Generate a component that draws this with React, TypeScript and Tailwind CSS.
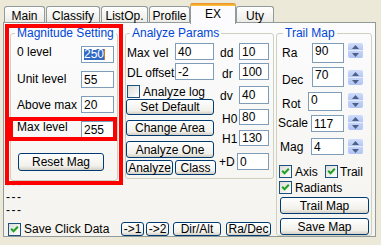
import React from "react";

type P = { className?: string; children?: React.ReactNode };

const Box = ({ className = "", children, top = false }: P & { top?: boolean }) => (
  <div
    className={`border border-[#7F9DB9] bg-white flex pl-[2px] leading-[14px] shrink-0 whitespace-nowrap ${top ? "items-start" : "items-center"} ${className}`}
  >
    {children}
  </div>
);

const Btn = ({ className = "", children }: P) => (
  <div
    className={`border border-[#003C74] rounded-[3px] bg-gradient-to-b from-white via-[#F1F0EA] via-75% to-[#D6D0C5] flex items-center justify-center leading-[14px] whitespace-nowrap shrink-0 ${className}`}
  >
    {children}
  </div>
);

const Check = ({ checked = false, className = "" }: { checked?: boolean; className?: string }) => (
  <div
    className={`w-[13px] h-[13px] border border-[#1C5180] bg-gradient-to-br from-[#DCDCD7] to-white flex items-center justify-center shrink-0 ${className}`}
  >
    {checked && (
      <svg width="11" height="11" viewBox="0 0 11 11">
        <path d="M2.2 4.8 L4.5 7.2 L8.8 2.8" stroke="#21A121" strokeWidth="2" fill="none" />
      </svg>
    )}
  </div>
);

const Spin = ({ className = "" }: { className?: string }) => (
  <div className={`w-[15px] h-[15px] flex flex-col shrink-0 ${className}`}>
    <div className="h-[7px] rounded-t-[2px] bg-gradient-to-b from-[#D0DCFB] to-[#B4C7F4] flex items-center justify-center">
      <svg width="7" height="4" viewBox="0 0 7 4">
        <path d="M0 4 L3.5 0 L7 4 Z" fill="#4D6185" />
      </svg>
    </div>
    <div className="h-[1px] bg-[#E4EAF6]" />
    <div className="h-[7px] rounded-b-[2px] bg-gradient-to-b from-[#C4D3F8] to-[#B0C4F3] flex items-center justify-center">
      <svg width="7" height="4" viewBox="0 0 7 4">
        <path d="M0 0 L3.5 4 L7 0 Z" fill="#4D6185" />
      </svg>
    </div>
  </div>
);

const Tab = ({ className = "", children }: P) => (
  <div
    className={`h-[16px] border-t border-l border-r border-[#919B9C] rounded-t-[3px] bg-gradient-to-b from-white to-[#ECEBE6] flex justify-center pt-[2px] leading-[14px] whitespace-nowrap ${className}`}
  >
    {children}
  </div>
);

const legendCls = "px-[2px] leading-[12px] text-[#0046D5] whitespace-nowrap";
const fsCls = "border border-[#D0D0BF] rounded-[3px] m-0 p-0 min-w-0 shrink-0";

export default function App() {
  return (
    <div className="w-[381px] h-[245px] bg-[#ECE9D8] text-[12px] leading-[14px] text-black font-['Liberation_Sans',Arial,sans-serif] overflow-hidden">
      {/* tabs */}
      <div className="relative z-10 flex items-end h-[22px] pl-[4px]">
        <Tab className="w-[41px]">Main</Tab>
        <Tab className="w-[54px] ml-[1px]">Classify</Tab>
        <Tab className="w-[47px] ml-[1px]">ListOp.</Tab>
        <Tab className="w-[41px] ml-[1px]">Profile</Tab>
        <div className="w-[46px] h-[21px] -mb-[2px] border-l border-r border-[#919B9C] rounded-t-[3px] bg-[#FCFCFE] flex flex-col">
          <div className="h-[3px] -mx-[1px] rounded-t-[3px] bg-gradient-to-b from-[#E68B2C] to-[#FFC73C]" />
          <div className="flex justify-center pt-[1px] leading-[14px]">EX</div>
        </div>
        <Tab className="w-[38px]">Uty</Tab>
      </div>

      {/* panel */}
      <div className="ml-[3px] w-[373px] h-[215px] border border-[#919B9C] bg-gradient-to-b from-[#FCFCFE] to-[#F4F3EE] flex items-start">
        <div className="w-[270px] flex flex-col shrink-0">
          <div className="flex items-start mt-[4px] pl-[6px]">
            {/* Magnitude Setting */}
            <div className="relative w-[108px] shrink-0">
              <fieldset className={`w-[108px] h-[154px] ${fsCls}`}>
                <legend className={`ml-[4px] ${legendCls}`}>Magnitude Setting</legend>
                <div className="flex flex-col pl-[6px]">
                  <div className="flex items-start mt-[7px] h-[17px]">
                    <span className="w-[64px] -mt-[1px]">0 level</span>
                    <Box className="w-[33px] h-[17px]">
                      <span className="bg-[#316AC5] text-white leading-[11px]">250</span>
                      <span className="w-[1px] h-[11px] bg-[#C8782A]" />
                    </Box>
                  </div>
                  <div className="flex items-start mt-[8px] h-[17px]">
                    <span className="w-[64px] mt-[1px]">Unit level</span>
                    <Box className="w-[33px] h-[17px]">55</Box>
                  </div>
                  <div className="flex items-start mt-[8px] h-[17px]">
                    <span className="w-[64px] mt-[2px]">Above max</span>
                    <Box className="w-[33px] h-[17px]">20</Box>
                  </div>
                  <div className="flex items-start mt-[8px] h-[17px]">
                    <span className="w-[64px] -mt-[1px]">Max level</span>
                    <Box className="w-[33px] h-[17px]">255</Box>
                  </div>
                  <Btn className="mt-[15px] ml-[1px] w-[86px] h-[18px]">Reset Mag</Btn>
                </div>
              </fieldset>
              <div className="absolute -left-[5px] -top-[3px] w-[118px] h-[161px] border-4 border-[#FF0000] pointer-events-none" />
              <div className="absolute -left-[1px] top-[90px] w-[108px] h-[24px] border-4 border-[#FF0000] pointer-events-none" />
            </div>

            {/* Analyze Params */}
            <fieldset className={`ml-[7px] w-[149px] h-[152px] ${fsCls}`}>
              <legend className={`ml-[4px] ${legendCls}`}>Analyze Params</legend>
              <div className="flex">
                <div className="flex flex-col w-[90px] shrink-0">
                  <div className="flex items-start mt-[4px] h-[17px]">
                    <span className="w-[48px] ml-[1px] mt-[3px] whitespace-nowrap">Max vel</span>
                    <Box className="w-[39px] h-[17px]">40</Box>
                  </div>
                  <div className="flex items-start mt-[3px] h-[17px]">
                    <span className="w-[48px] ml-[1px] mt-[3px] whitespace-nowrap">DL offset</span>
                    <Box className="w-[39px] h-[17px]">-2</Box>
                  </div>
                  <div className="flex items-center mt-[5px] h-[13px] ml-[1px]">
                    <Check />
                    <span className="ml-[3px] whitespace-nowrap">Analyze log</span>
                  </div>
                  <Btn className="mt-[1px] w-[88px] h-[16px]">Set Default</Btn>
                  <Btn className="mt-[5px] w-[88px] h-[16px]">Change Area</Btn>
                  <Btn className="mt-[5px] w-[88px] h-[17px]">Analyze One</Btn>
                  <div className="flex mt-[2px]">
                    <Btn className="w-[47px] h-[15px]">Analyze</Btn>
                    <Btn className="ml-[2px] w-[41px] h-[15px]">Class</Btn>
                  </div>
                </div>
                <div className="flex flex-col">
                  <div className="flex items-start mt-[4px] h-[17px]">
                    <span className="w-[23px] pl-[4px] mt-[3px]">dd</span>
                    <Box className="w-[30px] h-[17px]">10</Box>
                  </div>
                  <div className="flex items-start mt-[3px] h-[17px]">
                    <span className="w-[23px] pl-[6px] mt-[4px]">dr</span>
                    <Box className="w-[30px] h-[17px]">100</Box>
                  </div>
                  <div className="flex items-start mt-[6px] h-[18px]">
                    <span className="w-[23px] pl-[4px] mt-[3px]">dv</span>
                    <Box className="w-[30px] h-[18px]">40</Box>
                  </div>
                  <div className="flex items-start mt-[5px] h-[16px]">
                    <span className="w-[23px] pl-[6px] mt-[3px]">H0</span>
                    <Box className="w-[30px] h-[16px]">80</Box>
                  </div>
                  <div className="flex items-start mt-[5px] h-[16px]">
                    <span className="w-[23px] pl-[6px] mt-[2px]">H1</span>
                    <Box className="w-[30px] h-[16px]">130</Box>
                  </div>
                  <div className="flex items-start mt-[7px] h-[17px]">
                    <span className="w-[21px] pl-[3px] mt-[2px]">+D</span>
                    <Box className="w-[32px] h-[17px]">0</Box>
                  </div>
                </div>
              </div>
            </fieldset>
          </div>

          <div className="-mt-[3px] pl-[2px] leading-[13px] tracking-[1.5px]">
            <div>---</div>
            <div>---</div>
            <div>---</div>
          </div>

          <div className="flex items-center h-[14px] mt-[5px]">
            <Check checked className="ml-[4px]" />
            <span className="ml-[3px] w-[97px] whitespace-nowrap">Save Click Data</span>
            <Btn className="w-[23px] h-[14px]">{"->1"}</Btn>
            <Btn className="ml-[2px] w-[23px] h-[14px]">{"->2"}</Btn>
            <Btn className="ml-[4px] w-[48px] h-[14px]">Dir/Alt</Btn>
            <Btn className="ml-[5px] w-[45px] h-[14px]">Ra/Dec</Btn>
          </div>
        </div>

        {/* Trail Map */}
        <fieldset className={`ml-[2px] mt-[4px] w-[96px] h-[209px] ${fsCls}`}>
          <legend className={`ml-[6px] ${legendCls}`}>Trail Map</legend>
          <div className="flex flex-col">
            <div className="flex items-start mt-[4px]">
              <span className="w-[35px] pl-[5px] mt-[3px]">Ra</span>
              <Box top className="w-[32px] h-[20px]">90</Box>
              <Spin className="ml-[4px]" />
            </div>
            <div className="flex items-start mt-[4px]">
              <span className="w-[35px] pl-[5px] mt-[6px]">Dec</span>
              <Box top className="w-[32px] h-[20px]">70</Box>
              <Spin className="ml-[4px] mt-[3px]" />
            </div>
            <div className="flex items-start mt-[5px]">
              <span className="w-[31px] pl-[5px] mt-[5px]">Rot</span>
              <Box top className="w-[34px] h-[19px]">0</Box>
              <Spin className="ml-[6px] mt-[1px]" />
            </div>
            <div className="flex items-start mt-[4px]">
              <span className="w-[34px] pl-[1px] mt-[1px]">Scale</span>
              <Box className="w-[33px] h-[17px]">117</Box>
              <Spin className="ml-[4px]" />
            </div>
            <div className="flex items-start mt-[6px]">
              <span className="w-[34px] pl-[3px] mt-[2px]">Mag</span>
              <Box className="w-[33px] h-[17px]">4</Box>
              <Spin className="ml-[4px] mt-[1px]" />
            </div>
            <div className="flex items-center h-[13px] mt-[10px] pl-[2px]">
              <Check checked />
              <span className="ml-[3px] w-[30px]">Axis</span>
              <Check checked />
              <span className="ml-[2px]">Trail</span>
            </div>
            <div className="flex items-center h-[13px] mt-[3px] pl-[2px]">
              <Check checked />
              <span className="ml-[3px]">Radiants</span>
            </div>
            <Btn className="ml-[3px] mt-[3px] w-[89px] h-[17px]">Trail Map</Btn>
            <Btn className="ml-[3px] mt-[4px] w-[89px] h-[17px]">Save Map</Btn>
          </div>
        </fieldset>
      </div>
    </div>
  );
}
